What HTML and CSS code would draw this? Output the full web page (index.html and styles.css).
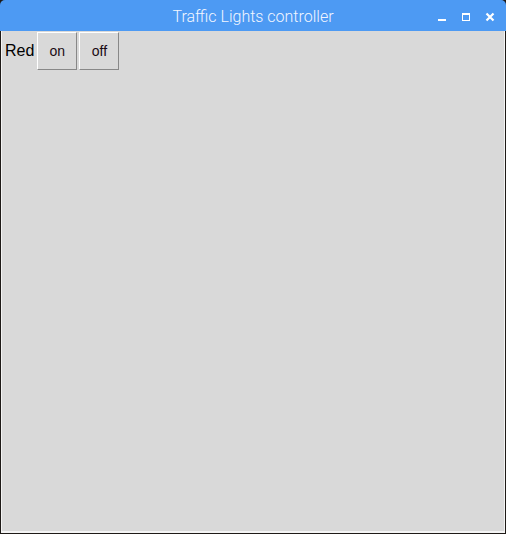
FILE: index.html
```html
<!DOCTYPE html>
<html>
<head>
<meta charset="utf-8">
<link rel="stylesheet" href="styles.css">
</head>
<body>
<div class="window">
  <div class="titlebar">
    <span class="title">Traffic Lights controller</span>
    <div class="controls">
      <svg class="ctl" width="10" height="10" viewBox="0 0 10 10"><rect x="1" y="7" width="8" height="2" fill="#fff"/></svg>
      <svg class="ctl" width="10" height="10" viewBox="0 0 10 10"><rect x="1.5" y="1.5" width="7" height="7" fill="none" stroke="#fff" stroke-width="1"/><rect x="1" y="1" width="8" height="2" fill="#fff"/></svg>
      <svg class="ctl" width="10" height="10" viewBox="0 0 10 10"><path d="M1.5 1.5 L8.5 8.5 M8.5 1.5 L1.5 8.5" stroke="#fff" stroke-width="2.2"/></svg>
    </div>
  </div>
  <div class="content">
    <div class="row">
      <span class="label">Red</span>
      <button class="btn">on</button>
      <button class="btn">off</button>
    </div>
  </div>
</div>
</body>
</html>
```
FILE: styles.css
```css
html, body {
  margin: 0;
  padding: 0;
  background: #1e1a17;
  width: 506px;
  height: 534px;
  overflow: hidden;
}
.window {
  width: 506px;
  height: 533px;
  display: flex;
  flex-direction: column;
  box-sizing: border-box;
}
.titlebar {
  height: 31px;
  background: #4d9af3;
  border-radius: 5px 5px 0 0;
  position: relative;
  display: flex;
  align-items: center;
  justify-content: center;
  flex-shrink: 0;
}
.title {
  font-family: Roboto, "Liberation Sans", sans-serif;
  font-weight: 300;
  font-size: 16px;
  color: #f2f6ff;
  margin-top: 2px;
}
.controls {
  position: absolute;
  right: 11px;
  top: 12px;
  display: flex;
  gap: 14px;
}
.ctl { display: block; }
.content {
  flex: 1;
  margin: 0 1px 0 1px;
  background: #d9d9d9;
  border-left: 1px solid #f4f4f4;
  border-right: 1px solid #f4f4f4;
  border-bottom: 2px solid #f4f4f4;
  box-sizing: border-box;
}
.row {
  display: flex;
  align-items: center;
  padding: 1px 0 0 3px;
  gap: 2px;
}
.label {
  font-family: "Liberation Sans", Arial, sans-serif;
  font-size: 16px;
  color: #000;
  margin-right: 1px;
}
.btn {
  width: 40px;
  height: 38px;
  background: #d9d9d9;
  border-style: solid;
  border-width: 1px;
  border-color: #ffffff #888888 #888888 #ffffff;
  font-family: "Liberation Sans", Arial, sans-serif;
  font-size: 14px;
  color: #1a0a14;
  padding: 0;
}
```
